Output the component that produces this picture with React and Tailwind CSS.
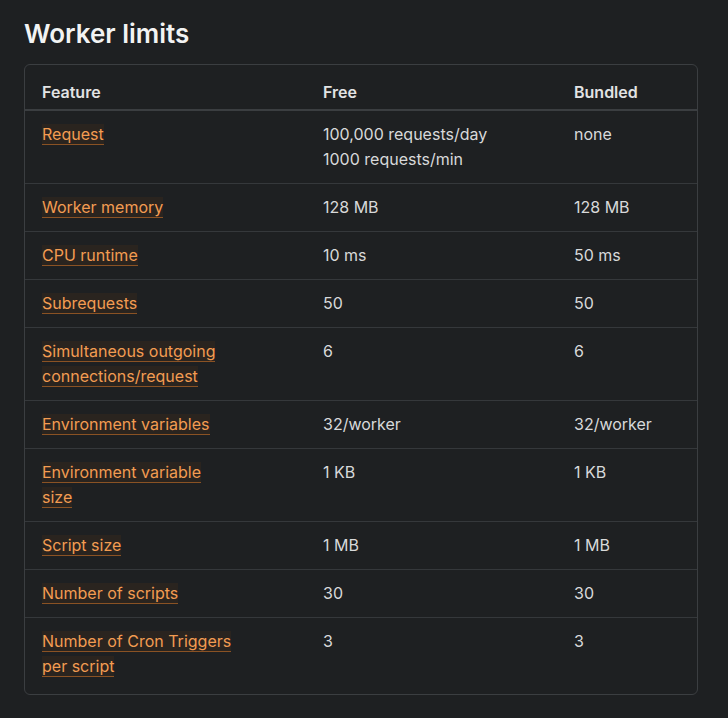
const ROWS = [
  { feature: ['Request'], free: ['100,000 requests/day', '1000 requests/min'], bundled: ['none'] },
  { feature: ['Worker memory'], free: ['128 MB'], bundled: ['128 MB'] },
  { feature: ['CPU runtime'], free: ['10 ms'], bundled: ['50 ms'] },
  { feature: ['Subrequests'], free: ['50'], bundled: ['50'] },
  { feature: ['Simultaneous outgoing', 'connections/request'], free: ['6'], bundled: ['6'] },
  { feature: ['Environment variables'], free: ['32/worker'], bundled: ['32/worker'] },
  { feature: ['Environment variable', 'size'], free: ['1 KB'], bundled: ['1 KB'] },
  { feature: ['Script size'], free: ['1 MB'], bundled: ['1 MB'] },
  { feature: ['Number of scripts'], free: ['30'], bundled: ['30'] },
  { feature: ['Number of Cron Triggers', 'per script'], free: ['3'], bundled: ['3'] },
];

function Lines({ lines }) {
  return lines.map((l, i) => (
    <span key={i}>
      {i > 0 && <br />}
      {l}
    </span>
  ));
}

function FeatureLink({ lines }) {
  return (
    <a
      href="#"
      className="border-b border-[#8a5224] bg-[#2a241f] text-[#f39c52] no-underline"
    >
      <Lines lines={lines} />
    </a>
  );
}

export default function App() {
  return (
    <div
      className="min-h-[718px] bg-[#1e2022] pl-6 pr-[30px] pt-[15px] pb-6 text-[16px] text-[#d8d9da]"
      style={{ fontFamily: 'Inter, "Noto Sans", sans-serif' }}
    >
      <h2 className="text-[26px] leading-[38px] font-semibold text-[#f2f3f3]">Worker limits</h2>
      <div className="mt-[11px] overflow-hidden rounded-md border border-[#3b3e41] pb-[4px]">
        <table className="w-full table-fixed border-collapse text-left leading-[25px]">
          <thead>
            <tr className="border-b-2 border-[#3b3e41]">
              <th className="w-[281px] px-[17px] pt-[15px] pb-[4px] font-semibold text-[#e2e3e4]">Feature</th>
              <th className="w-[251px] px-[17px] pt-[15px] pb-[4px] font-semibold text-[#e2e3e4]">Free</th>
              <th className="px-[17px] pt-[15px] pb-[4px] font-semibold text-[#e2e3e4]">Bundled</th>
            </tr>
          </thead>
          <tbody>
            {ROWS.map((r, i) => (
              <tr key={i} className={i > 0 ? 'border-t border-[#35383b]' : ''}>
                <td className="px-[17px] py-[11px] align-top">
                  <FeatureLink lines={r.feature} />
                </td>
                <td className="px-[17px] py-[11px] align-top">
                  <Lines lines={r.free} />
                </td>
                <td className="px-[17px] py-[11px] align-top">
                  <Lines lines={r.bundled} />
                </td>
              </tr>
            ))}
          </tbody>
        </table>
      </div>
    </div>
  );
}
